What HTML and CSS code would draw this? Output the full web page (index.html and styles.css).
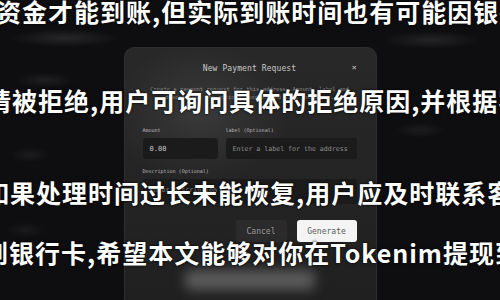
FILE: index.html
```html
<!DOCTYPE html>
<html lang="zh">
<head>
<meta charset="utf-8">
<title>New Payment Request</title>
<link rel="stylesheet" href="styles.css">
</head>
<body>
<div class="page">
  <div class="modal">
    <div class="modal-head">
      <span class="modal-title">New Payment Request</span>
      <span class="modal-close">&#x2715;</span>
    </div>
    <p class="modal-desc">Create a payment request for this address. Amount, label and description are optional and shared with the payer.</p>
    <div class="fields">
      <div class="field field-amount">
        <label class="field-label">Amount</label>
        <div class="input">0.00</div>
      </div>
      <div class="field field-label-col">
        <label class="field-label">label (Optional)</label>
        <div class="input placeholder">Enter a label for the address</div>
      </div>
    </div>
    <div class="field field-desc">
      <label class="field-label">Description (Optional)</label>
      <div class="input textarea placeholder">Enter description</div>
    </div>
    <div class="actions">
      <button class="btn btn-cancel">Cancel</button>
      <button class="btn btn-generate">Generate</button>
    </div>
    <div class="ghost"></div>
  </div>
</div>
<div class="overlay">
  <div class="line line1">资金才能到账,但实际到账时间也有可能因银行</div>
  <div class="line line2">请被拒绝,用户可询问具体的拒绝原因,并根据客</div>
  <div class="line line3">如果处理时间过长未能恢复,用户应及时联系客服</div>
  <div class="line line4">到银行卡,希望本文能够对你在Tokenim提现到账</div>
</div>
</body>
</html>
```

FILE: styles.css
```css
html, body {
  margin: 0;
  padding: 0;
}
body {
  width: 500px;
  height: 300px;
  overflow: hidden;
  position: relative;
  background-color: #0e0e10;
  background-image:
    radial-gradient(ellipse 55px 9px at 65px 38px, rgba(255,255,255,0.10), transparent),
    radial-gradient(ellipse 50px 9px at 430px 40px, rgba(255,255,255,0.09), transparent),
    radial-gradient(ellipse 30px 8px at 45px 80px, rgba(255,255,255,0.07), transparent),
    radial-gradient(ellipse 20px 8px at 30px 155px, rgba(255,255,255,0.06), transparent),
    radial-gradient(ellipse 25px 8px at 420px 130px, rgba(255,255,255,0.06), transparent),
    radial-gradient(ellipse 20px 8px at 25px 230px, rgba(255,255,255,0.05), transparent);
  font-family: "DejaVu Sans Mono", "Liberation Mono", monospace;
}
.page {
  display: flex;
  justify-content: center;
  padding-top: 47px;
}
.modal {
  width: 253px;
  height: 280px;
  box-sizing: border-box;
  border-radius: 10px;
  border: 1px solid #2e2e2e;
  background:
    radial-gradient(ellipse 90px 70px at 75px 65px, rgba(255,255,255,0.09), transparent),
    linear-gradient(180deg, #282828 0%, #232323 60%, #1f1f1f 100%);
  padding: 14px 19px 0 18px;
  display: flex;
  flex-direction: column;
}
.modal-head {
  height: 12px;
  display: flex;
  align-items: center;
  justify-content: center;
  position: relative;
}
.modal-title {
  font-size: 8px;
  color: #c8c8c8;
  letter-spacing: 0.1px;
}
.modal-close {
  position: absolute;
  right: 0;
  top: 0;
  font-size: 8px;
  line-height: 12px;
  color: #d0d0d0;
}
.modal-desc {
  margin: 11px 4px 0;
  font-size: 5.5px;
  line-height: 8px;
  color: #8a8a8a;
  text-align: center;
}
.fields {
  display: flex;
  gap: 8px;
  margin-top: 26px;
}
.field {
  display: flex;
  flex-direction: column;
  gap: 5px;
}
.field-amount {
  width: 75px;
}
.field-label-col {
  flex: 1;
}
.field-label {
  font-size: 5px;
  line-height: 6px;
  color: #bdbdbd;
}
.input {
  height: 21px;
  box-sizing: border-box;
  background: #1b1b1c;
  border-radius: 3px;
  padding: 0 7px;
  display: flex;
  align-items: center;
  font-size: 7px;
  color: #c4c4c4;
  white-space: nowrap;
  overflow: hidden;
}
.placeholder {
  color: #8e8e8e;
  font-size: 6.6px;
}
.field-desc {
  margin-top: 9px;
}
.textarea {
  height: 25px;
  align-items: flex-start;
  padding-top: 7px;
}
.actions {
  display: flex;
  justify-content: flex-end;
  gap: 10px;
  margin-top: 16px;
}
.btn {
  height: 22px;
  border: none;
  border-radius: 3px;
  font-family: "DejaVu Sans Mono", "Liberation Mono", monospace;
  font-size: 8px;
  padding: 0;
}
.btn-cancel {
  width: 51px;
  background: #2b2b2c;
  color: #9a9a9a;
}
.btn-generate {
  width: 60px;
  background: #f4f4f4;
  color: #5a5a5a;
}
.ghost {
  align-self: center;
  width: 130px;
  height: 20px;
  margin-top: 28px;
  background: #5a5a5a;
  border-radius: 6px;
  filter: blur(6px);
}
.overlay {
  position: absolute;
  inset: 0;
  display: flex;
  flex-direction: column;
  pointer-events: none;
}
.line {
  font-family: "Noto Sans CJK SC", "Noto Sans CJK JP", sans-serif;
  font-weight: 700;
  font-size: 25px;
  line-height: 25px;
  height: 25px;
  color: #ffffff;
  white-space: nowrap;
  letter-spacing: 1px;
  text-shadow: 0 0 3px rgba(0,0,0,0.9), 0 0 1px #000;
}
.line1 {
  margin-top: -1px;
  margin-left: -4px;
}
.line2 {
  margin-top: 64px;
  margin-left: -14px;
}
.line3 {
  margin-top: 67px;
  margin-left: -16px;
}
.line4 {
  margin-top: 35px;
  margin-left: -17px;
}
```
